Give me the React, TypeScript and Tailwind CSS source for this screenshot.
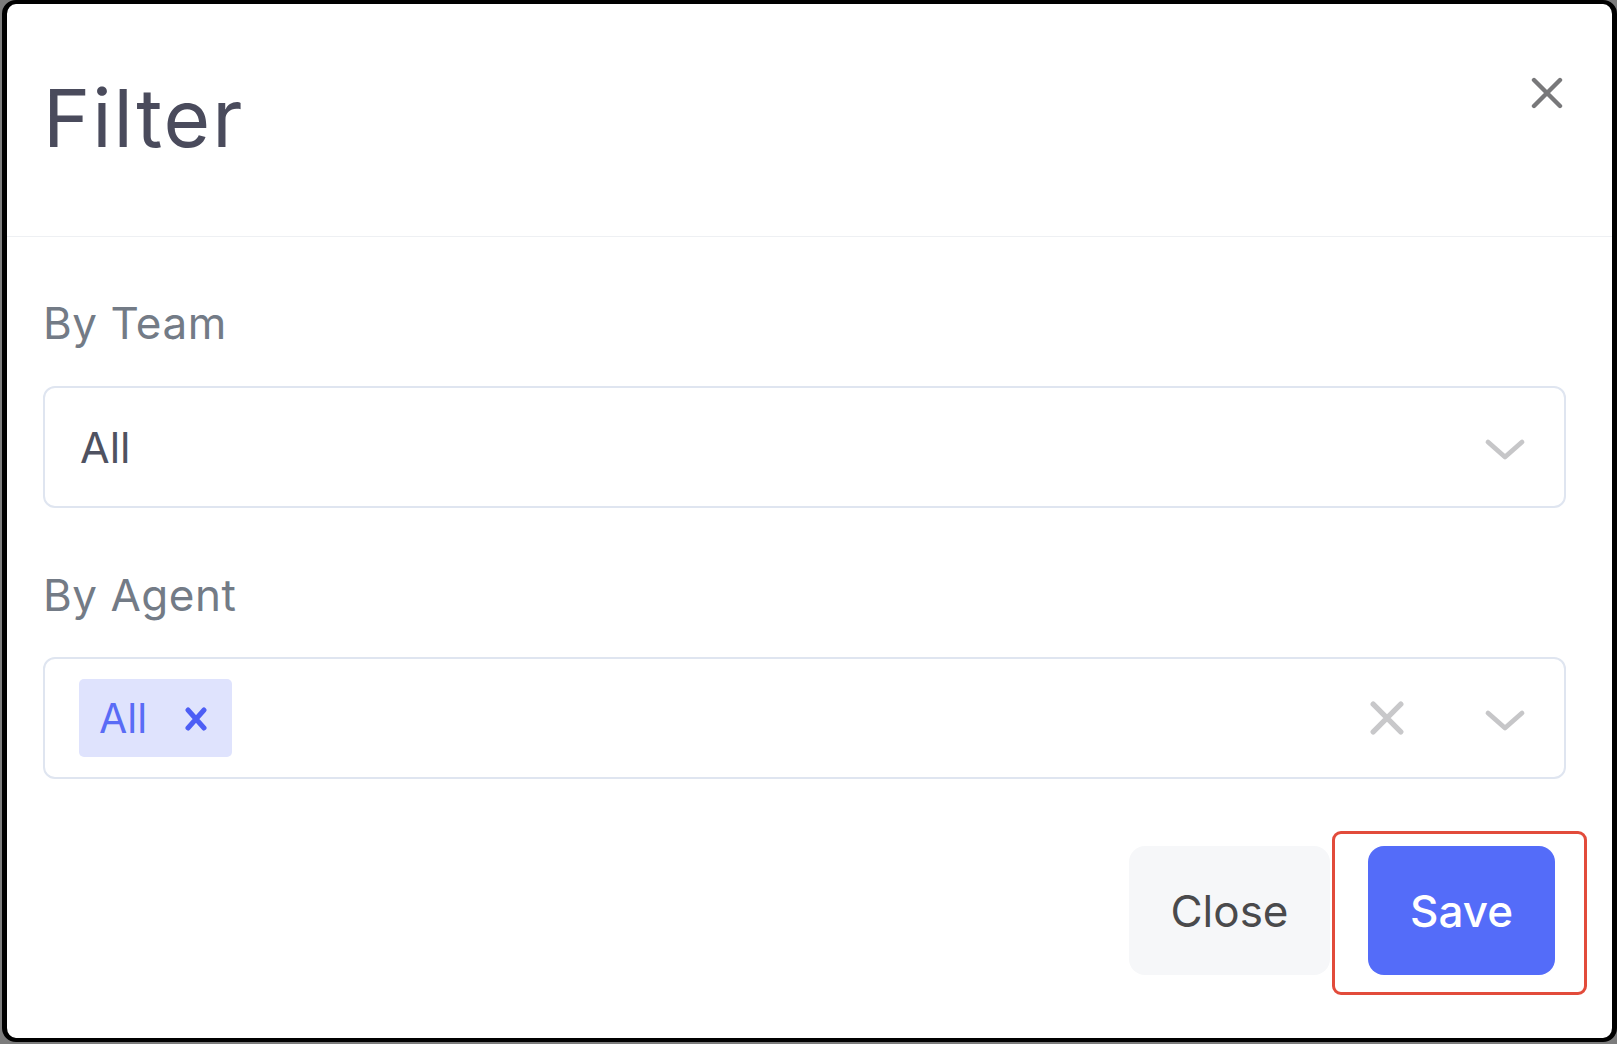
import React from "react";

function CrossIcon({ size, stroke, color }: { size: number; stroke: number; color: string }) {
  return (
    <svg width={size} height={size} viewBox="0 0 32 32" fill="none">
      <path d="M3 3 L29 29 M29 3 L3 29" stroke={color} strokeWidth={stroke} strokeLinecap="round" />
    </svg>
  );
}

function Chevron() {
  return (
    <svg width="42" height="26" viewBox="0 0 42 26" fill="none">
      <path d="M4 5 L21 20 L38 5" stroke="#c6c6c8" strokeWidth="4.8" strokeLinecap="round" strokeLinejoin="round" />
    </svg>
  );
}

function Label({ children }: { children: React.ReactNode }) {
  return <div className="text-[44px] leading-[44px] text-[#737b86] tracking-[0.5px]">{children}</div>;
}

export default function App() {
  return (
    <div className="w-[1617px] h-[1044px] bg-[#7c7c7c] font-['Inter','Noto_Sans',sans-serif]">
      <div className="ml-[2px] w-[1615px] h-[1042px] bg-white border-x-[5px] border-y-4 border-black rounded-[14px] flex flex-col">
        {/* header */}
        <div className="flex justify-between items-start pl-[36px] pr-[49px] pt-[73px] h-[233px] border-b border-[#eef0f3]">
          <h1 className="mt-[1px] text-[80px] leading-[80px] tracking-[2px] text-[#4a4b5c] font-normal">Filter</h1>
          <button className="w-[32px] h-[32px]">
            <CrossIcon size={32} stroke={4.4} color="#78787a" />
          </button>
        </div>

        {/* body */}
        <div className="flex flex-col pl-[36px] pr-[46px] pt-[64px]">
          <Label>By Team</Label>
          <div className="mt-[41px] h-[122px] border-2 border-[#dfe5f0] rounded-[12px] flex items-center justify-between pl-[35px] pr-[38px]">
            <span className="text-[43px] leading-[43px] text-[#4f5261]">All</span>
            <div className="mt-[5px]">
              <Chevron />
            </div>
          </div>

          <div className="mt-[65px]">
            <Label>By Agent</Label>
          </div>
          <div className="mt-[40px] h-[122px] border-2 border-[#dfe5f0] rounded-[12px] flex items-center pl-[34px] pr-[38px]">
            <div className="h-[78px] w-[153px] bg-[#dfe3fd] rounded-[5px] flex items-center pl-[20px]">
              <span className="text-[41px] leading-[41px] text-[#5a6cf6]">All</span>
              <span className="ml-[38px] mt-[2px]">
                <svg width="22" height="24" viewBox="0 0 22 24" fill="none">
                  <path d="M3 3 L19 21 M19 3 L3 21" stroke="#4d5ef5" strokeWidth="5" strokeLinecap="round" />
                </svg>
              </span>
            </div>
            <div className="flex-1" />
            <CrossIcon size={34} stroke={5} color="#c8c8ca" />
            <div className="ml-[80px] mt-[5px]">
              <Chevron />
            </div>
          </div>
        </div>

        {/* footer */}
        <div className="flex justify-end items-center gap-[38px] pr-[57px] mt-[67px]">
          <button className="w-[201px] h-[129px] rounded-[16px] bg-[#f6f7f9] text-[44px] leading-[44px] text-[#4a4a4c]">
            Close
          </button>
          <div className="relative">
            <button className="w-[187px] h-[129px] rounded-[16px] bg-[#546cf9] text-[44px] leading-[44px] font-medium text-white">
              Save
            </button>
            <div className="absolute -left-[36px] -right-[32px] -top-[15px] -bottom-[20px] border-[3px] border-[#e24b3b] rounded-[9px] pointer-events-none" />
          </div>
        </div>
      </div>
    </div>
  );
}
